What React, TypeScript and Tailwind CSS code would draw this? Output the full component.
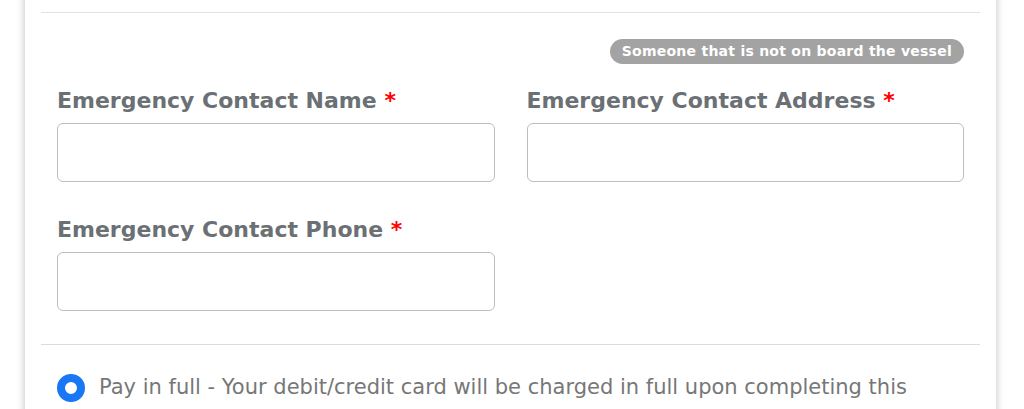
import React from 'react';

const Field: React.FC<{ label: string }> = ({ label }) => (
    <div className="flex flex-col">
        <label className="text-[22px] font-bold text-[#6b7074] leading-[28px] mb-[8px]">
            {label} <span className="text-[#ff0000]">*</span>
        </label>
        <input type="text" className="h-[59px] w-full rounded-[6px] border border-[#bdbdbd] bg-white px-3 outline-none" />
    </div>
);

export default function App() {
    return (
        <div className="w-full h-[409px] overflow-hidden bg-white" style={{ fontFamily: '"DejaVu Sans", sans-serif' }}>
            <div className="ml-[25px] w-[971px] -mt-[20px] bg-white shadow-[0_0_8px_rgba(0,0,0,0.25)] px-4 pt-[32px] pb-10">
                {/* Top divider */}
                <div className="border-t border-[#e2e2e2]" />

                <div className="px-4 pt-[26px]">
                    {/* Hint badge */}
                    <div className="flex justify-end">
                        <span className="rounded-full bg-[#a3a3a3] px-[12px] h-[25px] flex items-center text-[14px] tracking-[0.25px] font-bold text-white whitespace-nowrap">
                            Someone that is not on board the vessel
                        </span>
                    </div>

                    {/* Contact fields */}
                    <div className="grid grid-cols-2 gap-x-8 gap-y-[34px] mt-[23px]">
                        <Field label="Emergency Contact Name" />
                        <Field label="Emergency Contact Address" />
                        <Field label="Emergency Contact Phone" />
                    </div>
                </div>

                <div className="border-t border-[#dcdcdc] mt-[33px]" />

                {/* Payment option */}
                <div className="px-4 pt-[27px] flex items-center gap-[14px]">
                    <span className="w-[28px] h-[28px] rounded-full border-[8px] border-[#1877f2] bg-white shrink-0" />
                    <span className="text-[21px] text-[#777777] whitespace-nowrap">
                        Pay in full - Your debit/credit card will be charged in full upon completing this
                    </span>
                </div>
            </div>
        </div>
    );
}
